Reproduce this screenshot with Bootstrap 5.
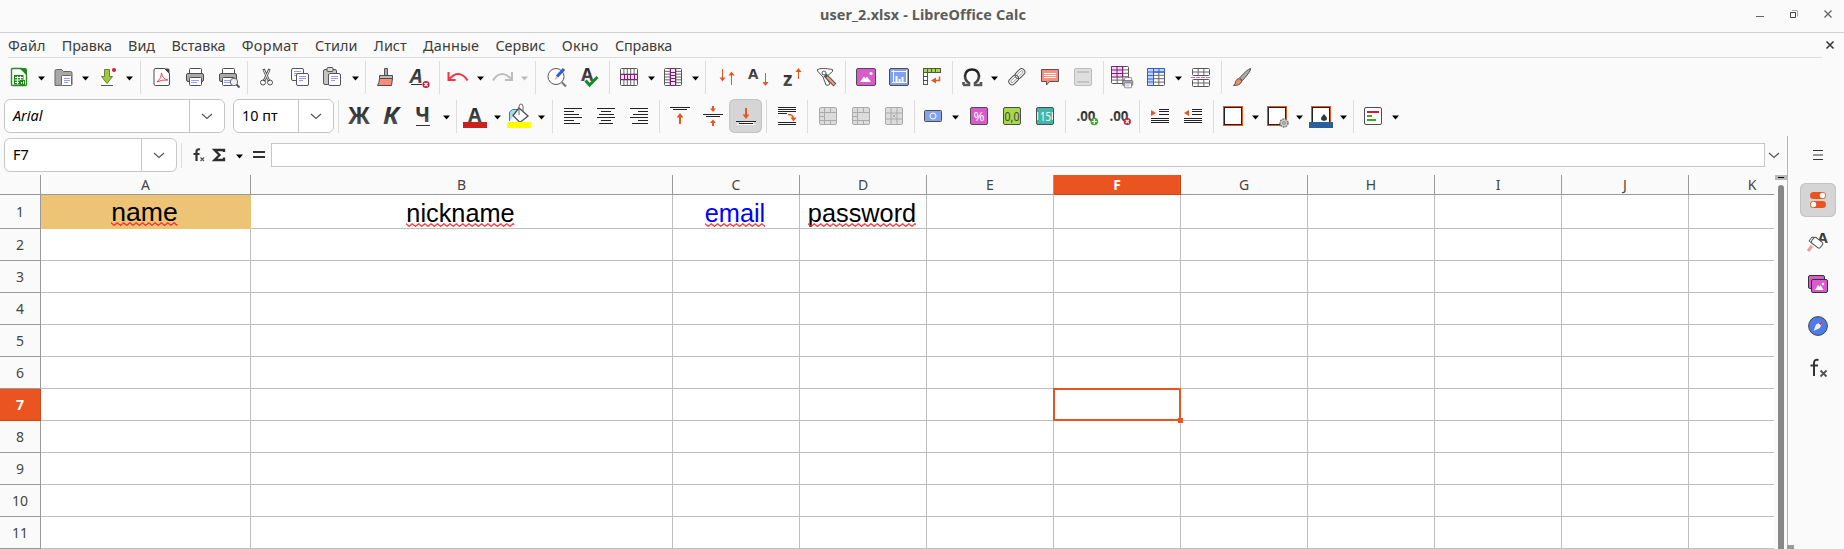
<!DOCTYPE html>
<html lang="ru">
<head>
<meta charset="utf-8">
<title>user_2.xlsx - LibreOffice Calc</title>
<link rel="stylesheet" href="https://cdn.jsdelivr.net/npm/bootstrap@5.3.0/dist/css/bootstrap.min.css">
<script src="https://cdn.jsdelivr.net/npm/bootstrap@5.3.0/dist/js/bootstrap.bundle.min.js"></script>
<style>
:root{--ink:#3d3d3d;--line:#c6c6c6;--acc:#e95420}
html,body{height:549px;overflow:hidden}
body{background:#fafafa;color:#3d3d3d;font:14.4px/20px "Noto Sans","Open Sans",sans-serif}
.titlebar{height:33px;border-bottom:1px solid #cfcfcf;color:#5c5c5c;font-weight:700;font-size:14.4px;padding:0 0 3px 2px}
.win-btns{right:0;top:0}
.menubar{height:25px;padding-left:8px}
.menubar nav{width:1814px;border-bottom:1px solid #dedede;height:25px;padding-top:3px}
.menubar nav a{color:var(--ink);text-decoration:none;white-space:nowrap;margin-right:16.3px}
.tools{height:38px;padding-left:2px}
.tools.fmt{padding-left:4px;height:40px}
.slot{width:33px;height:34px;padding:5px 4px 5px 5px;flex:none}
.slot svg{display:block;width:24px;height:24px;overflow:visible}
.slot.on{background:#d5d5d5;box-shadow:inset 0 0 0 1px #c3c3c3;border-radius:6px}
.arr{width:11px;flex:none;padding:3px 0 0 3px}
.arr svg,.chev svg{display:block}
.rule{width:1px;height:33px;background:#dcdcdc;flex:none}
.fbar .rule{height:25px}
.combo{height:34px;border:1px solid var(--line);border-radius:6px;background:#fff;color:#000;flex:none}
.combo span{padding-left:8px}
.combo i{width:35px;border-left:1px solid var(--line)}
.fbar{height:39px;padding:0 0 1px 4px}
.finput{width:1494px;height:24px;border:1px solid var(--line);background:#fff;flex:none}
.main{width:1787px}
.side{width:57px;border-left:1px solid #b8b8b8;height:409px;padding-top:2px}
.sheet{width:1774px;height:374px;overflow:hidden;background:#fff}
.rw{height:32px;width:1900px}
.rw.first{height:34px}
.rw.hd{height:20px;line-height:18px}
.hc,.cl{flex:none;display:flex;justify-content:center;align-items:center;white-space:nowrap;font-size:14px}
.hc{background:#fafafa;border-right:1px solid #999;border-bottom:1px solid #999;color:#454545}
.cl{border-right:1px solid #bfbfbf;border-bottom:1px solid #bfbfbf}
.hc.sel{background:var(--acc);color:#fff;font-weight:700;border-color:#c8481c}
.word{font:25.3px/24px "Liberation Sans",Arial,sans-serif;color:#000;position:relative;top:1px;left:-1px}
.word.big{font-size:26.6px;top:0}
.word svg{position:absolute;left:0;bottom:-2px;width:100%;height:4px}
.pick{position:relative}
.pick::before{content:"";position:absolute;left:-1px;top:-1px;right:-1px;bottom:-1px;border:2px solid var(--acc)}
.pick::after{content:"";position:absolute;right:-3px;bottom:-3px;width:5px;height:5px;background:var(--acc)}
.scroll{width:12px;margin-left:1px}
.scroll b{height:5px;background:#b8b8b8;display:flex;align-items:center;justify-content:center}
.scroll b::before{content:"";width:6px;height:1px;background:#000}
.scroll em{display:block;width:6px;height:365px;margin:5px 0 0 3px;background:#888;border-radius:3px 3px 0 0}
.side .slot{width:36px;margin-left:12px;padding-left:6px;margin-bottom:8px}
.side .slot:first-child{margin-bottom:11px}
.foot{left:1787px;top:545px;width:7px;height:4px;background:#999}
</style>
</head>
<body>
<svg width="0" height="0" class="position-absolute"><defs>
<linearGradient id="dk" x1="0" y1="0" x2="0" y2="1"><stop offset="0" stop-color="#1c1c1c"/><stop offset="1" stop-color="#5a5a5a"/></linearGradient>
<pattern id="wv" width="6.3" height="4" patternUnits="userSpaceOnUse"><path d="M-.4 .4L3.15 3.4L6.7 .4" fill="none" stroke="#f22" stroke-width="1.200"/></pattern>
</defs></svg>
<header class="titlebar d-flex align-items-center justify-content-center position-relative">
 <span data-fit="206">user_2.xlsx - LibreOffice Calc</span>
 <svg class="win-btns position-absolute" width="100" height="32" fill="none" stroke="#666"><path d="M12 16.500h8"/><path d="M46.500 12.500h5v5h-5z" stroke="#444"/><path d="M48 10.500h5.500v6" stroke="#aaa"/><path d="M80.500 10.500l7 7m0-7l-7 7" stroke-width="1.400"/></svg>
</header>
<div class="menubar d-flex">
 <nav class="d-flex" id="menu"></nav>
 <svg width="22" height="24" fill="none" stroke="#333" stroke-width="1.500"><path d="M4.500 8.500l7 7m0-7l-7 7"/></svg>
</div>
<div class="tools d-flex align-items-center" id="tb1"></div>
<div class="tools fmt d-flex align-items-center" id="tb2"></div>
<div class="d-flex">
 <main class="main">
  <div class="fbar d-flex align-items-center" id="fb"></div>
  <div class="d-flex"><div class="sheet" id="sheet"></div><div class="scroll"><b></b><em></em></div></div>
 </main>
 <aside class="side" id="side"></aside>
</div>
<div class="foot position-absolute"></div>
<script>
const S='stroke="#4d4d4d" fill="none"';
const table=(x,y,w,h,c,r)=>{let s=`<rect x="${x}" y="${y}" width="${w}" height="${h}" rx="1" fill="#fff" stroke="#555"/>`;for(let i=1;i<c;i++)s+=`<path d="M${x+w*i/c} ${y}v${h}" stroke="#666"/>`;for(let i=1;i<r;i++)s+=`<path d="M${x} ${y+h*i/r}h${w}" stroke="#666"/>`;return s};
const lines=a=>`<path d="${a.map(([x,y,w])=>`M${x} ${y}h${w}`).join('')}" stroke="#222"/>`;
const printer=`<rect x="6.500" y="3.500" width="12" height="6" rx="1" fill="#fff" stroke="#4d4d4d"/><rect x="3.500" y="8.500" width="17" height="8" rx="1.500" fill="#aaa" stroke="#4d4d4d"/><rect x="6.500" y="12.500" width="12" height="8" rx="1" fill="#fff" stroke="#4d4d4d"/><path d="M8 15.500h8m-8 2h6" stroke="#9b9bf0"/>`;
const txt=(t,x,y,s,e='')=>`<text x="${x}" y="${y}" font-family="Noto Sans" font-size="${s}" font-weight="700" fill="url(#dk)" ${e}>${t}</text>`;
const mergeI=`<rect x="3.500" y="3.500" width="17" height="17" rx="1.500" fill="#dcdcdc" stroke="#aaa"/><path d="M4 8.500h5M4 12.500h5M4 16.500h5M8.500 4v16M14.500 4v4M8 8.500h12M14.500 16v4M8 16.500h12" stroke="#aaa" fill="none"/>`;
const del=`<circle cx="19" cy="19.500" r="3.600" fill="#c8203a"/><path d="M17.500 18l3 3m0-3l-3 3" stroke="#fff" stroke-width="1.200"/>`;
const I={
new:`<path d="M5.500 3.500h9l5 6v10q0 1-1 1h-13q-1 0-1-1v-15q0-1 1-1z" fill="#fff" stroke="#2a8a22" stroke-width="1.400"/><path d="M12 3h6q2 0 2 2v5z" fill="#1f8a1a"/><path d="M7 10h9.500v9.500H7z" fill="#1f8a1a"/><path d="M8 12.500h8M8 15h8M8 17.500h4M10.500 11v8M13.500 11v5" stroke="#fff"/><path d="M13 15h5v5h-5z" fill="#1f8a1a"/><path d="M14.500 19v-2m2 2v-3" stroke="#fff"/>`,
open:`<path d="M4 20.500V6q0-1.500 1.500-1.500h5l2 2h7q1.500 0 1.500 1.500v12z" fill="#a8a8a8" stroke="#666"/><rect x="10.500" y="10.500" width="10" height="10" rx="1" fill="#fff" stroke="#666"/><path d="M13 13.500h6m-6 2h6m-6 2h4" stroke="#9b9bf0"/>`,
save:`<path d="M9.500 4.500h5v7h3L12 18.500l-5.500-7h3z" fill="#9ccc3c" stroke="#6d7d3d"/><path d="M6 20.500h12" stroke="#555"/><circle cx="19" cy="5" r="2" fill="#c8203a"/>`,
pdf:`<path d="M5 3.500h9.500l5 5v10.500q0 1.500-1.500 1.500H5.500q-1.500 0-1.500-1.500V5q0-1.500 1.500-1.500z" fill="#fff" stroke="#4d4d4d"/><path d="M14 3.500l5.500 5.500V5q0-1.500-1.500-1.500z" fill="#444"/><path d="M7 17q5-4 4.500-9q1 6 6.500 7-6-.5-11 2" stroke="#f04458" fill="none"/>`,
print:printer,
preview:printer+`<circle cx="18" cy="17" r="3.700" fill="#eee" stroke="#666"/><path d="M20.500 19.500l3 3" stroke="#555" stroke-width="2"/>`,
cut:`<path d="M8.500 4l5.500 12M14.500 4L9 16" stroke="#555" stroke-width="2.600"/><path d="M8.800 5l5 10.500M14.200 5L9.500 15" stroke="#ddd"/><circle cx="8" cy="17.500" r="2.500" ${S}/><circle cx="15" cy="17.500" r="2.500" ${S}/>`,
copy:`<rect x="3.500" y="3.500" width="12" height="12" rx="1.500" fill="#fff" stroke="#555"/><path d="M6 6.500h7m-7 2h4m-4 2h3" stroke="#9b9bf0"/><rect x="8.500" y="8.500" width="12" height="12" rx="1.500" fill="#fff" stroke="#555"/><path d="M11 11.500h7m-7 2h7m-7 2h4" stroke="#9b9bf0"/>`,
paste:`<rect x="2.500" y="4.500" width="13" height="15" rx="1.500" fill="#c4c4c4" stroke="#555"/><rect x="6" y="2.500" width="6" height="4" rx="1" fill="#ddd" stroke="#555"/><rect x="7.500" y="8.500" width="12" height="12" rx="1.500" fill="#fff" stroke="#555"/><path d="M10 11.500h7m-7 2h7m-7 2h4" stroke="#9b9bf0"/>`,
brush:`<path d="M10.500 3.500h3v7h-3z" fill="#aaa" stroke="#555"/><path d="M5.500 10.500h13v3h-13z" fill="#bbb" stroke="#4d4d4d"/><path d="M5.500 13.500h13l-1 7h-14q2-3 2-7z" fill="#f98c7b" stroke="#4d4d4d"/>`,
clear:txt('A',3,17.500,20,'font-style="italic"')+`<path d="M4 19.500h11" stroke="#333"/>`+del,
undo:`<path d="M2.500 7v8h7M3 14.500Q10 6 17 10.500q3 2 4.500 5" fill="none" stroke="#f0344a" stroke-width="2"/>`,
redo:`<path d="M22 7v8h-7M21.500 14.500Q14.500 6 7.500 10.500q-3 2-4.500 5" fill="none" stroke="#bdbdbd" stroke-width="2"/>`,
find:`<circle cx="11" cy="11.500" r="8" fill="#fff" stroke="#555"/><path d="M17 17.500l4 4" stroke="#777" stroke-width="2.200"/><path d="M19 4l-7 7.500" stroke="#2c60d8" stroke-width="3.200"/><path d="M11 11l2 2-3.500 2z" fill="#f0b080"/>`,
spell:txt('A',3,16,18)+`<path d="M7.500 15.500l4 4.500 8-8" fill="none" stroke="#158a26" stroke-width="3"/>`,
row:table(3.5,3.5,17,17,5,3)+`<path d="M3.500 9.500h17v5h-17z" fill="#f7def3" stroke="#7b1f78"/><path d="M7.500 9.500v5m3-5v5m3-5v5m4-5v5" stroke="#7b1f78"/>`,
col:table(3.5,3.5,17,17,3,6)+`<path d="M9.500 3.500h5v17h-5z" fill="#f7def3" stroke="#7b1f78"/><path d="M9.500 7.500h5m-5 3h5m-5 3h5m-5 3h5" stroke="#7b1f78"/>`,
sort:`<path d="M7.500 4v9m9-4v11" stroke="#e95420"/><path d="M4.500 12.500h6l-3 4zM13.500 10.500h6l-3-4z" fill="#e95420"/>`,
asc:txt('A',0,14,15)+`<path d="M17.500 8v9" stroke="#e95420"/><path d="M14.500 17h6l-3 4z" fill="#e95420"/>`,
desc:txt('z',2,21,19)+`<path d="M17.500 6v8" stroke="#e95420"/><path d="M14.500 7h6l-3-4z" fill="#e95420"/>`,
filter:`<path d="M3.500 4.500q4-2 15 0v2L12 12l4 7q-2 2-4 1L9 12 3.500 6z" fill="#fff" stroke="#555"/><path d="M11 10l10 10" stroke="#555" stroke-width="4"/><path d="M13 12l7.500 7.500" stroke="#f49a86" stroke-width="2"/><circle cx="10" cy="8" r="2" fill="#fff" stroke="#555"/>`,
image:`<rect x="2.500" y="3.500" width="19" height="17" rx="1.500" fill="#d85bcc" stroke="#4d4d4d"/><path d="M6 17l4-5.500 1.500 2 1.500-2L17 17z" fill="#fff"/><circle cx="17" cy="8.500" r="1.600" fill="#fff"/>`,
chart:`<rect x="2.500" y="3.500" width="19" height="17" rx="1.500" fill="#7fa0f5" stroke="#4d4d4d"/><path d="M4.500 6.500h15M6.500 5v13M19.500 5v13M5 17.500h15" stroke="#fff"/><path d="M9.500 17v-6m3 6v-3m3 3v-5" stroke="#fff" stroke-width="2"/>`,
pivot:`<rect x="7.500" y="3.500" width="13" height="4" fill="#a6d84a" stroke="#555"/><rect x="3.500" y="3.500" width="4" height="4" fill="#a6d84a" stroke="#555"/><rect x="3.500" y="7.500" width="4" height="12" fill="#fff" stroke="#555"/><path d="M3.500 11.500h4m-4 4h4M11.500 3.500v4m4-4v4" ${S}/><path d="M13 15.500h6.500v-4" fill="none" stroke="#e95420" stroke-width="1.500"/><path d="M11 15.500l5-3v6z" fill="#e95420"/>`,
omega:`<path d="M3 20h6v-2q-4-2.500-4-7.500 1-6 7-6t7 6q0 5-4 7.500v2h6v-3M3.500 17v3" fill="none" stroke="url(#dk)" stroke-width="2.600"/>`,
link:`<g transform="rotate(-45 12 12)" fill="none"><rect x="2" y="8.500" width="11" height="6.500" rx="3.200" stroke="#555"/><rect x="11" y="8.500" width="11" height="6.500" rx="3.200" stroke="#555"/><rect x="4" y="10.500" width="7" height="2.500" rx="1.200" stroke="#777" stroke-width=".7"/><rect x="13" y="10.500" width="7" height="2.500" rx="1.200" stroke="#777" stroke-width=".7"/></g>`,
note:`<path d="M3.500 4.500h17v12h-9l-3 3.500v-3.500h-5z" fill="#f9907f" stroke="#555"/><path d="M6 8.500h12M6 10.500h12M6 12.500h12" stroke="#fff"/>`,
head:`<rect x="3.500" y="3.500" width="17" height="17" rx="1.500" fill="#dedede" stroke="#bbb"/><path d="M6 7h12M6 17h12" stroke="#bbb" stroke-width="1.500"/>`,
area:table(0.5,1.5,17,17,3,5)+`<path d="M.5 1.500h11v10.500H.5zM6 1.500v10.500M.5 5h11m-11 3.500h11" fill="#f3d6f0" stroke="#7b1f78"/><g transform="translate(9.500 10.500) scale(.6)">${printer}</g>`,
freeze:table(3.5,3.5,17,17,3,5)+`<path d="M3.500 20.500V3.500h17v3.500h-11v13.500zM3.500 7h17M3.500 10.500h6m-6 3.500h6m-6 3h6M9.500 4v3m5.500-3v3" fill="#c5d6fb" stroke="#2c60d8"/>`,
split:table(3.5,3.5,17,7,3,2)+table(3.5,14.5,17,7,3,2)+`<path d="M2 12.500h20" stroke="#d86ab0" stroke-dasharray="4 1"/>`,
draw:`<path d="M20.500 3.500q1 2-8 12l-3-2.500q8-9 11-9.500z" fill="#aaa" stroke="#555"/><path d="M9 13.500l3 2.500q-2 5-8.500 4.500 2-1.500 2-4 1.500-3 3.500-3z" fill="#f08a70" stroke="#555"/>`,
Ж:txt('Ж',0,20,23,'textLength="22" lengthAdjust="spacingAndGlyphs"'),
К:txt('К',3,20,23,'font-style="italic" font-weight="500" textLength="16" lengthAdjust="spacingAndGlyphs"'),
Ч:txt('Ч',3,18,21)+`<path d="M4 21.500h14" stroke="#333"/>`,
fc:txt('A',5,18,19.5)+`<path d="M0 18h24v6H0z" fill="#c9211e"/>`,
fill:`<path d="M2.500 17V8l3-2.500h6" fill="#a9dcf0" stroke="#3d7f99"/><path d="M12 4l9 8-8 6.500-7-7z" fill="#fff" stroke="#4d4d4d" stroke-width="1.300"/><path d="M12 11V2.500q0-2.500 2-2.500t2 2.500v5" fill="none" stroke="#666"/><path d="M0 18h24v6H0z" fill="#ff0"/>`,
al:lines([[3,4.5,18],[3,7.5,10],[3,10.5,15],[3,13.5,18],[3,16.5,10],[3,19.5,16]]),
ac:lines([[3,4.5,18],[7,7.5,10],[5,10.5,15],[3,13.5,18],[7,16.5,10],[5,19.5,14]]),
ar:lines([[3,4.5,18],[11,7.5,10],[6,10.5,15],[3,13.5,18],[11,16.5,10],[5,19.5,16]]),
vt:lines([[2,3.5,20],[5,5.5,14]])+`<path d="M12 12v8" stroke="#e95420" stroke-width="2"/><path d="M8.500 13.500h7L12 9z" fill="#e95420"/>`,
vm:lines([[2,10.5,20],[5,12.5,14]])+`<path d="M12 2v3m0 14v3" stroke="#e95420" stroke-width="2"/><path d="M9 4.500h6l-3 3.500zM9 19h6l-3-3.500z" fill="#e95420"/>`,
vb:`<path d="M3 20.500h18M6 18.500h14" stroke="#fff"/>`+lines([[2,17.5,20],[5,19.5,14]])+`<path d="M12 4v8" stroke="#e95420" stroke-width="2"/><path d="M8.500 10.500h7L12 15z" fill="#e95420"/>`,
wrap:lines([[3,3.5,18],[3,5.5,18],[3,7.5,18],[3,18.5,18],[3,20.5,18]])+`<path d="M3 9.500h9" stroke="#222"/><path d="M13 10.500q5 0 5.500 4" fill="none" stroke="#e95420" stroke-width="1.400"/><path d="M15.500 13.500h6l-3 4z" fill="#e95420"/>`,
m1:mergeI,m2:mergeI,
m3:`<rect x="3.500" y="3.500" width="17" height="17" rx="1.500" fill="#dcdcdc" stroke="#aaa"/><path d="M9 4v5m6-5v5M9 15v5m6-5v5M4 9h16M4 15h16M9 9v6m6-6v6M10.500 10.500l3 3m0-3l-3 3" stroke="#aaa" fill="none"/>`,
cur:`<rect x="3.500" y="6.500" width="17" height="11" rx="1" fill="#82a2f6" stroke="#4d4d4d"/><circle cx="12" cy="12" r="3" fill="none" stroke="#fff"/>`,
pct:`<rect x="3.500" y="3.500" width="17" height="17" rx="1.500" fill="#d85bcc" stroke="#4d4d4d"/><text x="6.500" y="16.500" font-size="13" font-family="Noto Sans" fill="#fff" textLength="11" lengthAdjust="spacingAndGlyphs">%</text>`,
num:`<rect x="3.500" y="3.500" width="17" height="17" rx="1.500" fill="#a6d84a" stroke="#4d4d4d"/><text x="4.500" y="17" font-size="13" font-family="Noto Sans" fill="#444" textLength="15" lengthAdjust="spacingAndGlyphs">0,0</text>`,
date:`<rect x="3.500" y="3.500" width="17" height="17" rx="1.500" fill="#45b5a8" stroke="#4d4d4d"/><text x="7" y="16.500" font-size="12.500" font-family="Noto Sans" fill="#fff" textLength="11" lengthAdjust="spacingAndGlyphs">15</text><path d="M4.700 8v8m14.600-8v8" stroke="#fff"/>`,
add:txt('.00',2.5,17,14,'textLength="19" lengthAdjust="spacingAndGlyphs"')+`<circle cx="20.300" cy="17.500" r="3.800" fill="#3da82c"/><path d="M20.300 15v5m-2.500-2.500h5" stroke="#fff" stroke-width="1.200"/>`,
rem:txt('.00',2.5,17,14,'textLength="19" lengthAdjust="spacingAndGlyphs"')+`<g transform="translate(1.300 -2)">${del}</g>`,
ind:lines([[11,5.5,10],[11,7.5,10],[11,10.5,10],[3,14.5,18],[3,16.5,18],[3,18.5,18]])+`<path d="M3 6v6l5-3z" fill="#e95420"/>`,
out:lines([[11,5.5,10],[11,7.5,10],[11,10.5,10],[3,14.5,18],[3,16.5,18],[3,18.5,18]])+`<path d="M8 6v6L3 9z" fill="#e95420"/>`,
bor:`<rect x="2.500" y="2.500" width="19" height="19" fill="#fff" stroke="#e95420"/><rect x="3.500" y="3.500" width="17" height="17" fill="#fff" stroke="#222"/>`,
con:`<rect x="3.500" y="3.500" width="17" height="17" rx="1.500" fill="#fff" stroke="#4d4d4d"/><path d="M6 8h12" stroke="#d01c38" stroke-width="2"/><path d="M6 12h5m-5 4h9" stroke="#45a828" stroke-width="2"/>`,
fx:`<path d="M11 6.500q-3.500-1-3.500 2.500v9M4.500 11h6" fill="none" stroke="#333" stroke-width="2.200"/><path d="M11.500 14.500l3.500 3.500m0-3.500l-3.500 3.500" stroke="#555" stroke-width="1.200"/>`,
sum:`<path d="M16 9V7H6.500l5 5-5 5H16v-2.500" fill="none" stroke="#2c2c2c" stroke-width="2.300"/>`,
eq:`<path d="M6 9h12M6 14h12" stroke="#333" stroke-width="2"/>`,
ham:`<path d="M7 7.500h10M7 12h10M7 16.500h10" stroke="#333"/>`,
prop:`<g fill="#e95420"><rect x="4" y="4" width="16" height="7" rx="3.500"/><rect x="4" y="13" width="16" height="7" rx="3.500"/></g><circle cx="16.500" cy="7.500" r="2.700" fill="#fff"/><circle cx="7.500" cy="16.500" r="2.700" fill="#fff"/>`,
sty:txt('A',11.5,13,15)+`<path d="M6 16l-4 5" stroke="#f59a8c" stroke-width="3"/><path d="M7 14l-4-3 3-4 5 1" ${S}/><rect x="6" y="9" width="11" height="7" rx="2" transform="rotate(38 11 12)" fill="#fff" stroke="#4d4d4d"/>`,
gal:`<rect x="2.500" y="3.500" width="16" height="13" rx="1.500" fill="#d85bcc" stroke="#333"/><rect x="5.500" y="7.500" width="16" height="13" rx="1.500" fill="#d85bcc" stroke="#333"/><path d="M9 18l3-5 1.500 2 1-2 3 5z" fill="#fff"/><circle cx="17" cy="12" r="1.200" fill="#fff"/>`,
nav:`<circle cx="12" cy="12" r="9.400" fill="#4f7be8" stroke="#444"/><path d="M16.500 7.500l-2.500 6.500-6.500 3 2.500-6.500z" fill="#eee"/><path d="M16.800 7.200l-4 2 2 2z" fill="#d8203a"/>`,
fx2:`<path d="M12.500 4q-4.500-1-4.500 3v13M4.500 9.500h7.500" fill="none" stroke="#333" stroke-width="2"/><path d="M14.500 14.500l6 6m0-6l-6 6" stroke="#555" stroke-width="1.800"/>`
};
I.bst=I.bor+`<circle cx="19" cy="19" r="4" fill="#ccc" stroke="#777" stroke-width="1.500" stroke-dasharray="1.800 1"/><circle cx="19" cy="19" r="1.300" fill="#fff" stroke="#777"/>`;
I.bco=I.bor+`<path d="M15 10q6 6 0 7-6-1 0-7z" fill="#2b3a45"/><path d="M0 18h24v6H0z" fill="#2a6099"/>`;
const slot=(n,c='')=>`<div class="slot ${c}"><svg viewBox="0 0 24 24">${I[n]}</svg></div>`;
const arr=(f='#000')=>`<div class="arr"><svg width="8" height="5"><path d="M0 .5h7L3.500 4.500z" fill="${f}"/></svg></div>`;
const chev='<svg width="12" height="7" fill="none" stroke="#555" stroke-width="1.200"><path d="M1 1l5 4.500L11 1"/></svg>';
/* toolbar description: icon name, v = drop-down arrow, [before, after] = separator gaps, number = spacer */
const bar=a=>a.map(t=>t==='v'?arr():t==='x'?arr('#bbb'):Array.isArray(t)?`<div class="rule" style="margin:0 ${t[1]}px 0 ${t[0]}px"></div>`:typeof t==='number'?`<div class="flex-shrink-0" style="margin-left:${t}px"></div>`:t==='vb'?slot(t,'on'):slot(t)).join('');
tb1.innerHTML=bar(['new','v','open','v','save','v',[6,4],'pdf','print','preview',[3,2],'cut','copy','paste','v',[5,3],'brush','clear',[4,1],'undo','v','redo','x',[6,4],'find','spell',[3,2],'row','v','col','v',[5,4],'sort','asc','desc','filter',[3,3],'image','chart','pivot',[4,2],'omega','v',1,'link','note','head',[4,2],'area','freeze','v',1,'split',[4,3],'draw']);
const combo=(t,w,c='')=>`<div class="combo d-flex justify-content-between align-items-center" style="width:${w}px"><span class="${c}">${t}</span><i class="h-100 d-flex align-items-center justify-content-center">${chev}</i></div>`;
tb2.innerHTML=combo('Arial',221,'fst-italic')+'<div class="ps-2"></div>'+combo('10 пт',101)+bar([[4,4],'Ж',-1,'К',-1,'Ч','v',[5,1],'fc','v','fill','v',[6,3],'al','ac','ar',[4,3],'vt','vm','vb',[4,3],'wrap',[4,3],'m1','m2','m3',[4,1],'cur','v',2,'pct','num','date',[4,3],'add','rem',[4,3],'ind','out',[4,2],'bor','v','bst','v','bco','v',[5,2],'con','v']);
fb.innerHTML=combo('F7',173)+bar([[4,2],'fx',-14,'sum',-3,'v',-2,'eq',-4])+'<div class="finput"></div><div class="chev ms-auto" style="width:19px">'+chev+'</div>';
side.innerHTML=['ham','prop','sty','gal','nav','fx2'].map(n=>slot(n,n==='prop'?'on':'')).join('');
menu.innerHTML=[['Файл',37.5],['Правка',50],['Вид',27],['Вставка',54],['Формат',57],['Стили',42.5],['Лист',33],['Данные',56],['Сервис',50],['Окно',37],['Справка',57]].map(m=>`<a href="#" data-fit="${m[1]}">${m[0]}</a>`).join('');
/* worksheet */
const W=[210,422,127,127,127,127,127,127,127,127,127];
const word=(t,c='',s='')=>`<span class="word ${c}" ${s}>${t}<svg><rect width="100%" height="4" fill="url(#wv)"/></svg></span>`;
const vals=[word('name','big'),word('nickname'),word('email','text-primary-cell','style="color:#00f"'),word('password')];
let h='<div class="rw hd d-flex"><div class="hc" style="width:41px"></div>'+W.map((w,i)=>`<div class="hc ${i===5?'sel':''}" style="width:${w}px">${'ABCDEFGHIJK'[i]}</div>`).join('')+'</div>';
for(let r=1;r<=11;r++)h+=`<div class="rw d-flex ${r===1?'first':''}"><div class="hc ${r===7?'sel':''}" style="width:41px">${r}</div>`+W.map((w,i)=>`<div class="cl ${r===7&&i===5?'pick':''}" style="width:${w}px${r===1&&i===0?';background:#edc375;border-color:#edc375':''}">${r===1&&vals[i]||''}</div>`).join('')+'</div>';
sheet.innerHTML=h;
/* tune tracking so that each label takes its nominal width */
document.querySelectorAll('[data-fit]').forEach(e=>{const w=e.getBoundingClientRect().width,n=e.textContent.length;e.style.letterSpacing=(e.dataset.fit-w)/n+'px'});
</script>
</body>
</html>
